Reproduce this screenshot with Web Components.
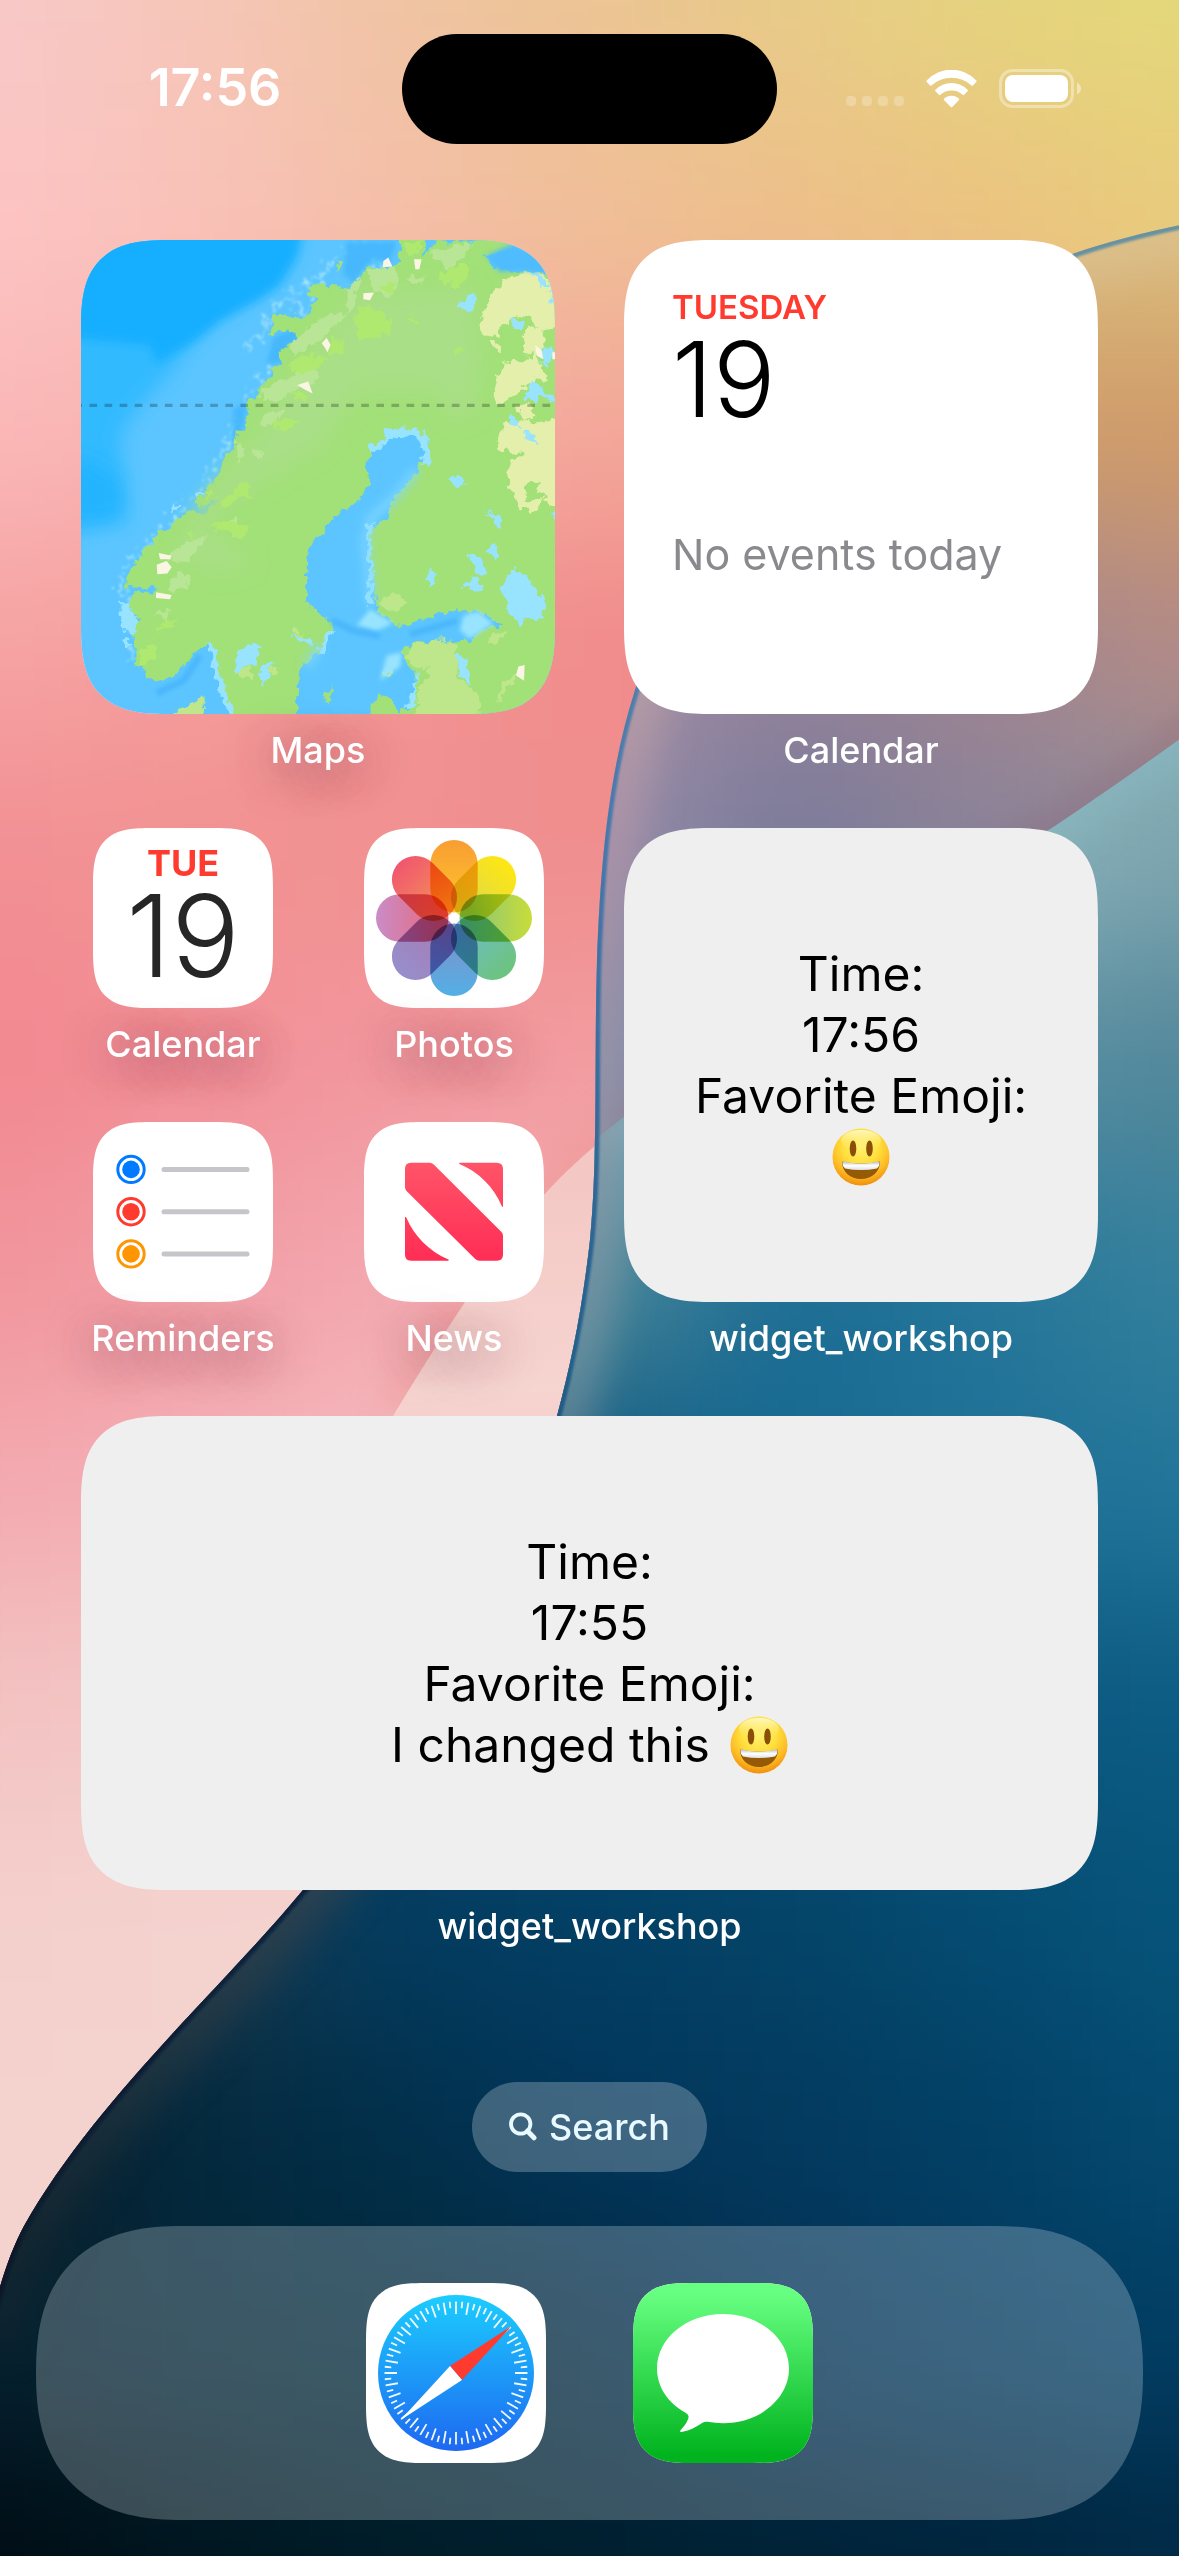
<!DOCTYPE html>
<html lang="en">
<head>
<meta charset="utf-8">
<meta name="viewport" content="width=device-width, initial-scale=1">
<title>Home Screen</title>
<style>
  html, body { margin: 0; }
  body { font-family: Inter, "Noto Sans", sans-serif; }
</style>
</head>
<body>
<home-screen>
  <status-bar slot="status" time="17:56"></status-bar>

  <widget-tile label="Maps" shade><map-view></map-view></widget-tile>
  <widget-tile label="Calendar"><calendar-view day="Tuesday" date="19">No events today</calendar-view></widget-tile>

  <app-group>
    <app-icon label="Calendar" glyph="calendar" shade></app-icon>
    <app-icon label="Photos" glyph="photos" shade></app-icon>
    <app-icon label="Reminders" glyph="reminders" shade></app-icon>
    <app-icon label="News" glyph="news" shade></app-icon>
  </app-group>
  <widget-tile label="widget_workshop"><workshop-view time="17:56"></workshop-view></widget-tile>

  <widget-tile label="widget_workshop" wide><workshop-view time="17:55">I changed this</workshop-view></widget-tile>

  <search-pill slot="search">Search</search-pill>
  <app-dock slot="dock">
    <app-icon glyph="safari" name="Safari"></app-icon>
    <app-icon glyph="messages" name="Messages"></app-icon>
  </app-dock>
</home-screen>

<script>
const define = (name, render) => customElements.define(name, class extends HTMLElement {
  connectedCallback() {
    if (this.shadowRoot) return;
    this.attachShadow({ mode: 'open' }).innerHTML = render(this);
  }
});

/* ---------- wallpaper ---------- */
const GRID_X = 196.5, GRID_Y = 213;
function mesh(rows) {
  let out = '';
  rows.forEach((row, j) => {
    const cells = row.trim().split(/\s+/);
    while (cells.length < 7) cells.push(cells[cells.length - 1]);
    cells.forEach((c, i) => {
      const x0 = i === 0 ? -400 : (i - .5) * GRID_X, x1 = i === 6 ? 1580 : (i + .5) * GRID_X + 1;
      const y0 = j === 0 ? -400 : (j - .5) * GRID_Y, y1 = j === 12 ? 2960 : (j + .5) * GRID_Y + 1;
      out += `<rect x="${x0}" y="${y0}" width="${x1 - x0}" height="${y1 - y0}" fill="#${c}"/>`;
    });
  });
  return out;
}
const PINK = [
  'f8c8c8 f6c6b8 f0c4a4 ecc494 e8cb88 e5d37e e4d87a',
  'fcc4c4 f9c2b8 f4bfa8 f0bf98 edc08a ebc480 e8cc7c',
  'fab8b8 f8b4b0 f6aca4 f4a89c f0a890 f0b088 ecc080',
  'f6a4a4 f59c9c f29494 f18c8c ef8888',
  'f29094 f29292 f19090 f08e8e f08e8e',
  'f28890 f29098 f2979e f29ca0 f0a0a0',
  'f2959c f29ea6 f3a8b0 f4b0b4 f4b0b4',
  'f3aab0 f4b0b6 f5bcc0 f5c4c4',
  'f3c2c2 f4c8c6 f5d0cc',
  'f4d0cc f4d2ce', 'f4d2ce', 'f4d2ce', 'f4d2ce'];
const SAND = [
  'dcc084', 'dcc084 dcc084 dcc084 dcc084 dcc084 dcc082 dcc080',
  'b090a0 b090a0 b090a0 b090a0 c09a80 d09c6c d09c68',
  'a890a8 a890a8 a890a8 a890a8 94829a a08490 b48a86',
  '9c8ca8 9c8ca8 9c8ca8 948ca8 787a9a 8a8299 8c909e',
  '8088ac 8088ac 8088ac 8088ac 8088ac 8c90a0 8c90a0',
  'a08090', 'a08090', 'a08090', 'a08090', 'a08090', 'a08090', 'a08090'];
const TEAL = [
  '8cb8c0', '8cb8c0', '8cb8c0', '8cb8c0',
  '80b8c4 80b8c4 80b8c4 80b8c4 82b4bc 8ab4bc 7ea4ae',
  '78bcc8 78bcc8 78bcc8 78bcc8 5a98ac 5a90a4 52879a',
  '4c8898 4c8898 4c8898 4c8898 1c6c94 24769a 34809c',
  '14507a 14507a 0f5880 0f5880 166a92 1f7096 22769a',
  '103050 103050 0a4468 084c74 0a5078 0c5680 0c5c84',
  '1c3a4c 1c3a4c 033c60 033f64 044468 054c72 06547a',
  '0c1e2a 03293e 022f4a 02355a 033a5e 034066 054a70',
  '062230 032536 022838 022840 023054 02385c 023e64',
  '000c14 00161f 001c28 001f2e 002236 00243c 012a46'];
const EDGE = 'M1260 210 C1200 220 1130 234 1075 253 C860 330 690 520 635 690 C606 780 600 880 597 960 C594 1060 598 1160 590 1240 C582 1310 572 1360 557 1416 C520 1590 420 1760 303 1890 C225 1985 95 2100 24 2226 C8 2256 -2 2290 -14 2340';
const FOLD = 'M1260 682 C1185 735 1130 776 1052 828 C900 915 760 1010 597 1138';

define('wall-paper', () => `
<style>:host{display:block} svg{display:block;width:100%;height:100%}</style>
<svg viewBox="0 0 1179 2556" preserveAspectRatio="none" aria-hidden="true">
  <defs>
    <filter id="soft" filterUnits="userSpaceOnUse" x="-100" y="-100" width="1379" height="2756" color-interpolation-filters="sRGB"><feGaussianBlur stdDeviation="74"/></filter>
    <filter id="b2" filterUnits="userSpaceOnUse" x="-100" y="-100" width="1379" height="2756"><feGaussianBlur stdDeviation="1"/></filter>
    <filter id="b12" filterUnits="userSpaceOnUse" x="-100" y="-100" width="1379" height="2756" color-interpolation-filters="sRGB"><feGaussianBlur stdDeviation="18"/></filter>
    <clipPath id="body"><path d="${EDGE} L-14 2640 L1300 2640 L1300 210Z"/></clipPath>
    <clipPath id="lower"><path d="${FOLD} L400 1200 L-100 1700 L-100 2700 L1300 2700 L1300 690Z"/></clipPath>
    <clipPath id="upper"><path d="${FOLD} L400 1200 L400 0 L1300 0Z"/></clipPath>
    <linearGradient id="petal" x1="0" y1="1140" x2="0" y2="1640" gradientUnits="userSpaceOnUse"><stop offset="0" stop-color="#f3c6c2"/><stop offset=".5" stop-color="#f6d4d0"/><stop offset="1" stop-color="#f4cfcb" stop-opacity="0"/></linearGradient>
    <linearGradient id="line" x1="0" y1="200" x2="0" y2="2300" gradientUnits="userSpaceOnUse"><stop offset="0" stop-color="#6a94a0"/><stop offset=".3" stop-color="#4a78ac"/><stop offset=".55" stop-color="#24608c"/><stop offset=".8" stop-color="#082440"/><stop offset="1" stop-color="#081828"/></linearGradient>
    <linearGradient id="glow" x1="0" y1="200" x2="0" y2="2300" gradientUnits="userSpaceOnUse"><stop offset="0" stop-color="#e0c898" stop-opacity=".4"/><stop offset=".3" stop-color="#b094a8" stop-opacity=".8"/><stop offset=".55" stop-color="#7c98a4" stop-opacity=".65"/><stop offset=".8" stop-color="#34444f" stop-opacity=".75"/><stop offset="1" stop-color="#182830" stop-opacity=".5"/></linearGradient>
  </defs>
  <g filter="url(#soft)">${mesh(PINK)}</g>
  <path d="M640 1110 C560 1170 520 1215 465 1302 C430 1355 412 1385 393 1416" fill="none" stroke="#ee8c84" stroke-opacity=".5" stroke-width="22" filter="url(#b12)"/>
  <path d="M640 1110 C560 1170 520 1215 465 1302 C430 1355 412 1385 393 1416 L280 1640 L640 1640Z" fill="url(#petal)"/>
  <g clip-path="url(#body)">
    <g filter="url(#soft)">${mesh(SAND)}</g>
    <g clip-path="url(#upper)"><path d="${FOLD}" fill="none" stroke="#8a5a6c" stroke-opacity=".6" stroke-width="18" filter="url(#b12)"/></g>
    <g clip-path="url(#lower)"><g filter="url(#soft)">${mesh(TEAL)}</g>
      <path d="${FOLD}" fill="none" stroke="#8cbcc4" stroke-opacity=".5" stroke-width="36" filter="url(#b12)"/></g>
    <path d="${EDGE}" fill="none" stroke="url(#glow)" stroke-width="70" filter="url(#b12)"/>
    <path d="${EDGE}" fill="none" stroke="url(#line)" stroke-width="9" filter="url(#b2)"/>
  </g>
</svg>`);

/* ---------- screen ---------- */
define('home-screen', () => `
<style>
  :host{display:flex;flex-direction:column;position:relative;min-height:100vh;overflow:hidden}
  wall-paper{position:absolute;inset:0;z-index:-1}
  main{display:grid;grid-template-columns:1fr 1fr;column-gap:69px;padding:0 81px;margin-top:96px}
  .search{display:flex;justify-content:center;margin:78px 0 54px}
  .dock{margin:auto 36px 36px}
</style>
<wall-paper></wall-paper>
<slot name="status"></slot>
<main><slot></slot></main>
<div class="search"><slot name="search"></slot></div>
<div class="dock"><slot name="dock"></slot></div>`);

define('status-bar', el => `
<style>
  :host{display:grid;grid-template-columns:1fr 375px 1fr;align-items:center;height:110px;padding-top:34px;color:#fff}
  time{font-size:52px;line-height:60px;font-weight:600;text-align:center;padding:0 0 2px 28px}
  .island{height:110px;border-radius:55px;background:#000}
  .side{display:flex;align-items:center;justify-content:flex-end;gap:22px;padding-right:97px}
  .cell{display:flex;gap:6px;padding-top:24px}
  .cell i{width:10px;height:10px;border-radius:4px;background:rgba(255,255,255,.24)}
  svg{display:block}
</style>
<time>${el.getAttribute('time')}</time>
<div class="island"></div>
<div class="side">
  <div class="cell"><i></i><i></i><i></i><i></i></div>
  <svg width="51" height="38" viewBox="0 0 51 38" fill="#fff" role="img" aria-label="Wi-Fi">
    <path d="M.7 10.4A34 34 0 0 1 50.3 10.4Q51 11 50.4 11.7L47 15.4Q46.3 16 45.6 15.4A30 30 0 0 0 5.4 15.4Q4.7 16 4 15.4L.6 11.7Q0 11 .7 10.4Z"/>
    <path d="M9.4 19.8A22.6 22.6 0 0 1 41.6 19.8Q42.3 20.5 41.6 21.2L38.1 24.8Q37.4 25.5 36.7 24.8A16.7 16.7 0 0 0 14.3 24.8Q13.6 25.5 12.9 24.8L9.4 21.2Q8.7 20.5 9.4 19.8Z"/>
    <path d="M18 28.8A10.6 10.6 0 0 1 33 28.8Q33.6 29.4 33 30L26.2 36.9Q25.5 37.6 24.8 36.9L18 30Q17.4 29.4 18 28.8Z"/>
  </svg>
  <svg width="83" height="40" viewBox="0 0 83 40" role="img" aria-label="Battery">
    <rect x="1.5" y="1.5" width="72" height="36" rx="12" fill="none" stroke="#fff" stroke-opacity=".38" stroke-width="3"/>
    <rect x="6" y="6" width="63" height="27" rx="8" fill="#fff"/>
    <path d="M78 13.500Q82 15.500 82 19.500T78 25.500Z" fill="#fff" fill-opacity=".45"/>
  </svg>
</div>`);

const LABEL = `
  .label{display:flex;justify-content:center;align-items:center;height:42px;padding:15px 0 57px;font-size:36px;line-height:42px;font-weight:500;color:#fff;white-space:nowrap}
  :host([shade]) .label{text-shadow:0 8px 40px rgba(110,60,80,.45),0 8px 56px rgba(110,60,80,.4)}`;

define('widget-tile', el => `
<style>
  :host{display:block;min-width:0}
  :host([wide]){grid-column:1 / -1}
  .face{height:474px;border-radius:66px;overflow:hidden;background:#efefef}
  @supports (corner-shape: superellipse(1.5)){.face{border-radius:90px;corner-shape:superellipse(1.5)}}
  ${LABEL}
</style>
<div class="face"><slot></slot></div>
<div class="label">${el.getAttribute('label')}</div>`);

define('calendar-view', el => `
<style>
  :host{display:flex;flex-direction:column;box-sizing:border-box;height:100%;padding:46px 48px;background:#fff}
  .day{font-size:33px;line-height:42px;font-weight:600;color:#ff3b30;text-transform:uppercase}
  .date{font-size:104px;line-height:102px;font-weight:300;color:#000}
  p{margin:96px 0 0;font-size:43px;line-height:56px;color:#8a8a8e;white-space:nowrap}
</style>
<div class="day">${el.getAttribute('day')}</div>
<div class="date">${el.getAttribute('date')}</div>
<p><slot></slot></p>`);

define('smiley-face', () => `
<style>:host{display:inline-flex;flex:none} svg{display:block}</style>
<svg width="58" height="58" viewBox="0 0 58 58" role="img" aria-label="😃">
  <defs>
    <radialGradient id="f" cx=".5" cy=".3" r=".72"><stop offset="0" stop-color="#fff27a"/><stop offset=".45" stop-color="#ffdf3c"/><stop offset=".75" stop-color="#fdb924"/><stop offset="1" stop-color="#ee8a08"/></radialGradient>
    <linearGradient id="h" x1="0" y1="0" x2="0" y2="1"><stop offset="0" stop-color="#fffbd0" stop-opacity=".9"/><stop offset="1" stop-color="#ffe850" stop-opacity="0"/></linearGradient>
    <linearGradient id="t" x1="0" y1="0" x2="0" y2="1"><stop offset="0" stop-color="#b8bcc4"/><stop offset=".5" stop-color="#fff"/><stop offset="1" stop-color="#dde0e6"/></linearGradient>
  </defs>
  <circle cx="29" cy="29" r="28.500" fill="url(#f)"/>
  <ellipse cx="29" cy="13" rx="20" ry="11" fill="url(#h)"/>
  <ellipse cx="21" cy="20.500" rx="3.300" ry="8" fill="#8a4e06"/>
  <ellipse cx="37.500" cy="20.500" rx="3.300" ry="8" fill="#8a4e06"/>
  <path d="M10 33.500Q29 38 48 33.500C48 44 39.500 51 29 51S10 44 10 33.500Z" fill="#945a06"/>
  <path d="M10.500 33.300Q29 38 47.500 33.300Q48 38 45 40.500Q29 43.500 13 40.500Q10 38 10.500 33.300Z" fill="url(#t)"/>
</svg>`);

define('workshop-view', el => `
<style>
  :host{display:flex;flex-direction:column;align-items:center;justify-content:center;height:100%;font-size:48px;line-height:61px;color:#000;white-space:nowrap}
  div{height:61px}
  .fav{display:flex;align-items:center;gap:20px}
</style>
<div>Time:</div>
<div>${el.getAttribute('time')}</div>
<div>Favorite Emoji:</div>
<div class="fav">${el.textContent.trim() ? '<slot></slot>' : ''}<smiley-face></smiley-face></div>`);

/* ---------- map ---------- */
define('map-view', () => `
<style>:host{display:block;height:100%} svg{display:block;width:100%;height:100%}</style>
<svg viewBox="63 56 1422 1327" preserveAspectRatio="none" role="img" aria-label="Map of Scandinavia">
  <defs>
    <filter id="coast" filterUnits="userSpaceOnUse" x="0" y="0" width="1560" height="1460"><feTurbulence type="fractalNoise" baseFrequency=".045" numOctaves="2" seed="4"/><feDisplacementMap in="SourceGraphic" scale="34" xChannelSelector="R" yChannelSelector="G"/></filter>
    <filter id="spray" filterUnits="userSpaceOnUse" x="0" y="0" width="1560" height="1460"><feTurbulence type="fractalNoise" baseFrequency=".04" numOctaves="3" seed="9"/><feDisplacementMap in="SourceGraphic" scale="90" xChannelSelector="R" yChannelSelector="G"/><feGaussianBlur stdDeviation="2.500"/></filter>
    <filter id="s30" filterUnits="userSpaceOnUse" x="-100" y="-100" width="1760" height="1660"><feGaussianBlur stdDeviation="28"/></filter>
    <filter id="s15" filterUnits="userSpaceOnUse" x="-100" y="-100" width="1760" height="1660"><feGaussianBlur stdDeviation="14"/></filter>
    <filter id="s8" filterUnits="userSpaceOnUse" x="-100" y="-100" width="1760" height="1660"><feGaussianBlur stdDeviation="6"/></filter>
  </defs>
  <rect x="0" y="0" width="1600" height="1500" fill="#5cc5ff"/>
  <path filter="url(#s30)" fill="#30baff" d="M-80 -80H740L700 110L620 190L470 280L390 350L330 430L240 520L180 600L190 700L200 840L-80 900Z"/>
  <path filter="url(#s15)" fill="#12afff" d="M-80 -80H750L710 100L660 180L600 220L480 280L400 340L290 400L270 350L-80 320Z"/>
  <path filter="url(#s30)" fill="#20b4ff" d="M-80 640L100 680L180 730L180 830L-80 860Z"/>
  <g filter="url(#spray)" fill="none" stroke="#a4e4ff" stroke-width="9">
    <path stroke-dasharray="40 12" d="M830 110L780 160L730 190L680 210L640 260L610 320L550 360"/>
    <path stroke-dasharray="24 16" d="M640 410L590 460L550 530L520 580L490 640L460 690L420 760L360 810L310 860L260 900L210 950L180 1010L195 1060L205 1150L220 1240"/>
    <path stroke-dasharray="30 10" d="M850 90L930 80L900 130M960 70L980 100L880 160M700 240L740 250L780 190"/>
  </g>
  <path filter="url(#s8)" fill="#46b8fd" d="M640 330L710 300L720 330L660 400L620 400ZM860 60H1010L990 120L940 110L880 180L850 150ZM520 530L560 510L550 590L520 640Z"/>
  <g filter="url(#coast)">
    <path fill="#a2e078" d="M1020 20L1110 20L1090 100L1130 60L1250 60L1300 20H1360L1350 90L1270 100L1320 140L1540 150V1440H930L932 1350L960 1325L1000 1345L1010 1375L1055 1370L1070 1270L1035 1240L1030 1200L1075 1180L1220 1180L1280 1140L1330 1135L1260 1095L1160 1095L1040 1138L1000 1130L950 1085L940 1000L920 880L980 830L1000 780L1060 720L1080 680L1110 680L1108 620L1060 590L975 590L970 620L930 635L932 660L920 680L928 740L880 800L840 815L770 890L748 920L738 990L738 1075L800 1110L820 1145L780 1210L730 1240L715 1300L705 1440H540L495 1310L470 1220L440 1180L350 1270L290 1298L220 1240L230 1200L215 1150L240 1120L205 1090L215 1045L290 1042L290 1030L195 1028L205 975L250 930L290 880L340 860L350 830L400 815L430 825L480 785L420 800L400 795L440 750L480 710L490 670L525 640L535 590L555 590L565 510L620 450L640 415L665 400L655 370L690 345L700 370L720 340L700 310L620 320L640 290L640 260L700 270L740 270L770 220L740 215L760 180L830 180L850 190L880 195L920 130L960 140L1020 120Z"/>
    <path fill="#a2e078" d="M825 110L845 120L830 150ZM790 1340L820 1300L805 1355Z"/>
  </g>
  <path filter="url(#s30)" fill="#a9df86" d="M900 200L1230 190L1270 380L1240 540L1180 560L1120 480L900 480L780 640L560 760L430 860L580 960L480 990L350 940L420 800L580 620L720 400Z"/>
  <g filter="url(#coast)">
    <path fill="#b9e696" d="M930 140L1010 130L1015 190L980 220L930 180ZM1110 90L1240 60L1200 110L1160 140ZM860 200L900 160L880 240L850 270L780 340L700 380L690 350L790 270L860 260ZM640 460L760 410L780 440L700 480L640 510L600 490ZM330 930L390 900L450 880L380 960L320 950ZM330 1010L370 980L390 1020L330 1040ZM575 640L620 650L600 670ZM285 1100L330 1090L325 1130ZM530 620L555 640L535 680ZM1045 160H1090L1080 180L1045 175ZM620 540L680 530L640 570L600 575ZM500 840L530 830L520 890Z"/>
    <path fill="#afe96f" d="M900 240L950 250L990 280L990 320L900 335L880 290ZM1140 150L1180 130L1220 120L1230 150L1190 195L1170 175L1145 190ZM1035 270L1080 280L1075 295ZM1040 60L1090 60L1065 100L1035 95ZM690 400L760 370L800 390L770 420L700 430ZM820 330L860 340L840 380L800 370ZM700 480L740 490L735 510L710 500ZM630 560L720 560L680 590L640 580ZM550 730L580 780L540 770L500 810L480 800ZM440 860L500 840L570 860L540 895L500 870ZM380 870L405 880L390 900ZM240 1200L290 1185L290 1230L240 1250ZM290 1150L320 1120L345 1130ZM960 190L1010 170L1000 215ZM1190 360L1210 350L1195 380ZM430 760L460 765L440 785Z"/>
    <path fill="#e3efaa" d="M1330 170L1400 145L1450 150L1485 190L1520 290L1440 310L1400 270L1350 275L1310 325L1260 320L1255 290L1275 250L1295 205ZM1330 400L1400 390L1380 330L1400 300L1450 310L1460 350L1430 380L1460 440L1390 470L1350 500L1310 520L1295 490L1305 450ZM1335 570L1400 560L1450 570L1520 530L1520 810L1470 800L1460 770L1420 820L1370 800L1350 750L1350 715L1335 705L1370 650L1310 640L1315 610ZM1370 520L1400 515L1430 550L1390 560ZM1290 340L1320 350L1310 365Z"/>
    <path fill="#a2e078" d="M1400 740L1440 730L1430 760L1460 770L1420 790L1390 770ZM1390 375L1420 370L1415 390ZM1350 650L1400 648L1395 662Z"/>
    <path fill="#bee68a" d="M1110 1180L1160 1175L1190 1190L1190 1280L1260 1330L1265 1440H1060L1075 1330L1110 1250L1075 1260L1040 1225L1060 1190ZM1290 1165L1345 1150L1310 1190L1275 1185ZM1000 1040L1040 1070L1000 1100L955 1080ZM700 1135L740 1165L700 1160ZM520 1265L570 1255L580 1290ZM330 1390L430 1330L435 1440ZM970 1265L1005 1255L990 1275ZM630 1260L660 1255L640 1275ZM1310 1350L1320 1300L1380 1265L1340 1310Z"/>
  </g>
  <g fill="#98e4ff" filter="url(#coast)">
    <path d="M1350 980L1400 990L1425 1030L1460 1075L1445 1115L1400 1115L1385 1140L1345 1090L1340 1060L1315 1025L1340 1015ZM1205 225L1245 205L1250 235L1220 258L1195 240ZM1165 725L1185 715L1222 738L1185 750ZM1280 812L1325 840L1320 862ZM1300 900L1320 925L1300 950L1285 930ZM1225 935L1262 942L1285 990L1250 988ZM1240 995L1270 1025L1245 1040L1210 1020ZM1110 970L1128 990L1115 1035L1102 1000ZM1185 1220L1218 1222L1230 1280L1235 1305L1203 1285ZM560 1185L600 1185L590 1238L525 1268L530 1220ZM620 1235L645 1240L610 1305L597 1270ZM695 1168L750 1165L765 1195ZM1350 542L1380 560L1375 582L1346 565ZM1388 588L1420 600L1442 628L1398 610ZM1420 445L1480 500L1500 530L1440 490L1430 508L1392 500ZM1346 275L1392 290L1370 308ZM1452 357L1478 358L1465 405L1442 400ZM1465 200L1500 210L1475 240ZM1415 145L1450 162L1475 190L1440 182ZM1468 825L1520 815V850ZM175 1065L190 1070L225 1110L235 1130L230 1160L190 1150ZM190 1170L215 1185L195 1200ZM345 785L360 810L335 825ZM405 755L425 765L410 780Z"/>
    <path d="M975 585L1065 583L1108 618L1112 685L1085 685L1090 640L1060 606L1000 608L960 640L925 660L925 632L970 620ZM435 1180L455 1185L475 1235L500 1320L535 1400L500 1380L470 1290L450 1210ZM920 850L945 850L930 890L940 1000L940 1080L920 1080L925 980ZM800 1150L825 1150L790 1210L775 1200ZM1075 1265L1065 1360L1020 1372L1050 1350Z"/>
  </g>
  <path filter="url(#s8)" fill="#98e4ff" d="M1210 1108L1255 1095L1300 1130L1230 1172L1200 1150ZM930 1090L1000 1128L950 1150L890 1135ZM980 1220L1025 1210L1020 1250L960 1290Z"/>
  <path filter="url(#s15)" fill="none" stroke="#84d9ff" stroke-width="22" stroke-opacity=".8" d="M1070 700L1000 780L930 840L915 900L925 990L930 1080M740 1250L780 1190"/>
  <path filter="url(#s8)" fill="none" stroke="#48b6fb" stroke-width="18" d="M815 1120L880 1150L960 1165M1050 1160L1190 1122M420 1220L370 1290L290 1325"/>
  <path filter="url(#s8)" fill="#50bcfd" d="M1280 100L1350 70L1440 100L1475 150L1380 140L1320 145Z"/>
  <path fill="#fbf5e4" d="M970 115L985 105L997 130L968 132ZM1062 110H1085L1078 138H1066ZM910 205L942 203L930 225L910 222ZM785 345L800 330L812 350L802 370L795 358ZM712 462L745 452L758 486L735 475ZM296 932L335 940L330 950H300ZM290 965L320 955L335 972L322 990L292 992ZM288 1042L335 1050L330 1062L288 1058ZM1375 1250L1394 1246L1392 1290L1368 1275ZM1425 350L1445 365L1450 390L1430 380ZM1477 370H1485V390H1477Z"/>
  <path d="M63 519H1485" stroke="#000" stroke-opacity=".24" stroke-width="9" stroke-dasharray="23 22.300" stroke-dashoffset="20"/>
</svg>`);

/* ---------- app icons ---------- */
const petals = [
  ['#f99d33', '#fcc42c'], ['#ffe712', '#dcd84c'], ['#c8dd38', '#88c47c'], ['#6cc47c', '#70bcc8'],
  ['#52b0e6', '#8090c8'], ['#968ecb', '#a87cb4'], ['#c98cc8', '#e86878'], ['#f1566f', '#f29258']];
const ticks = Array.from({ length: 72 }, (_, i) =>
  `<path d="M90 18.500V${i % 2 ? 25 : 31}" transform="rotate(${i * 5} 90 90)"/>`).join('');
const GLYPHS = {
  calendar: '<div class="cal"><b>TUE</b><span>19</span></div>',
  photos: `<svg viewBox="0 0 180 180"><defs>${petals.map((c, i) =>
      `<linearGradient id="p${i}" x1="0" y1="0" x2="0" y2="1"><stop offset="0" stop-color="${c[0]}"/><stop offset=".9" stop-color="${c[1]}"/></linearGradient>`).join('')}</defs>
    <g style="isolation:isolate">${petals.map((c, i) =>
      `<rect x="66.300" y="12" width="47.400" height="72.500" rx="23.700" fill="url(#p${i})" transform="rotate(${i * 45} 90 90)" style="mix-blend-mode:multiply"/>`).join('')}</g>
    <circle cx="90" cy="90" r="5" fill="#fff"/></svg>`,
  reminders: `<svg viewBox="0 0 180 180">${[['#007aff', 47.4], ['#ff3b30', 89.7], ['#ff9500', 131.9]].map(([c, y]) =>
      `<circle cx="38" cy="${y}" r="13.200" fill="none" stroke="${c}" stroke-width="3"/><circle cx="38" cy="${y}" r="8.800" fill="${c}"/>
       <path d="M71 ${y}H154" stroke="#c6c6ca" stroke-width="5" stroke-linecap="round"/>`).join('')}</svg>`,
  news: `<svg viewBox="0 0 180 180"><defs><linearGradient id="n" x1="0" y1="40" x2="0" y2="139" gradientUnits="userSpaceOnUse"><stop offset="0" stop-color="#ff5468"/><stop offset="1" stop-color="#ff2d55"/></linearGradient></defs>
    <g fill="url(#n)"><path d="M47 40.700H65.500Q68 40.700 70 42.700L137.500 110Q139 111.500 139 114V132.500Q139 138.700 133 138.700H115.500Q113 138.700 111 136.700L42.500 69Q41 67.500 41 65V47Q41 40.700 47 40.700Z"/>
    <path d="M95.500 40.700H132.500Q139 40.700 139 47V84.500Q138.500 85.500 137.700 84C130 65 114 49.500 95.500 42Q94.500 41 95.500 40.700Z"/>
    <path d="M41 95.500Q41.500 94 42.300 95.500C50 114 65.500 129.500 84.500 137.500Q85.500 138.500 84 138.700H47Q41 138.700 41 132.500Z"/></g></svg>`,
  safari: `<svg viewBox="0 0 180 180"><defs><linearGradient id="s" x1="0" y1="0" x2="0" y2="1"><stop offset="0" stop-color="#1ccdfe"/><stop offset="1" stop-color="#1d68f1"/></linearGradient></defs>
    <circle cx="90" cy="90" r="78" fill="url(#s)"/><g stroke="#fff" stroke-width="1.800" stroke-opacity=".95">${ticks}</g>
    <path d="M145.700 42.800L84 83L96 97Z" fill="#ff3b30"/><path d="M34.300 137.200L84 83L96 97Z" fill="#fff"/></svg>`,
  messages: `<svg viewBox="0 0 180 180"><defs><linearGradient id="m" x1="0" y1="0" x2="0" y2="1"><stop offset=".06" stop-color="#67ff81"/><stop offset=".95" stop-color="#01b41f"/></linearGradient></defs>
    <rect width="180" height="180" fill="url(#m)"/>
    <path fill="#fff" d="M90 31C126.500 31 156 55.400 156 85.600S126.500 140.200 90 140.200Q82.500 140.200 74.500 138.800Q72 138.300 69.500 139.700C62.500 144.500 56 148 48.500 149Q46 149 47.700 147C52 142.500 55.500 137 55.600 133.500Q55.600 131.500 53 130C35 120.500 24 104 24 85.600C24 55.400 53.500 31 90 31Z"/></svg>`
};
define('app-icon', el => `
<style>
  :host{display:block;width:180px}
  button{display:flex;flex-direction:column;align-items:center;width:100%;padding:0;border:0;background:none;font:inherit;color:inherit}
  .face{width:180px;height:180px;border-radius:41px;overflow:hidden;background:#fff}
  @supports (corner-shape: superellipse(1.5)){.face{border-radius:60px;corner-shape:superellipse(1.6)}}
  svg{display:block;width:100%;height:100%}
  .cal{display:flex;flex-direction:column;align-items:center;padding-top:14px}
  .cal b{font-size:36px;line-height:42px;font-weight:700;color:#ff3b30}
  .cal span{font-size:114px;line-height:104px;font-weight:300;color:#262626}
  ${LABEL}
</style>
<button type="button" aria-label="${el.getAttribute('label') || el.getAttribute('name')}">
  <div class="face">${GLYPHS[el.getAttribute('glyph')]}</div>
  ${el.hasAttribute('label') ? `<div class="label">${el.getAttribute('label')}</div>` : ''}
</button>`);

define('app-group', () => `
<style>:host{display:grid;grid-template-columns:180px 180px;justify-content:space-between;align-content:start;padding:0 11px 0 12px}</style>
<slot></slot>`);

define('search-pill', () => `
<style>
  :host{display:block}
  button{display:flex;align-items:center;gap:12px;height:90px;padding:0 37px;border:0;border-radius:45px;background:rgba(255,255,255,.24);color:#e8f9ff;font:500 36px/42px Inter,"Noto Sans",sans-serif}
  svg{display:block}
</style>
<button type="button">
  <svg width="28" height="30" viewBox="0 0 28 30" fill="none" stroke="currentColor" aria-hidden="true"><circle cx="11.700" cy="12" r="9.700" stroke-width="3.800"/><path d="M18.500 19L25 25.800" stroke-width="5" stroke-linecap="round"/></svg>
  <slot></slot>
</button>`);

define('app-dock', () => `
<style>
  :host{display:flex;justify-content:center;align-items:center;gap:87px;box-sizing:border-box;height:294px;border-radius:120px;background:rgba(243,251,255,.24)}
  @supports (corner-shape: superellipse(1.5)){:host{border-radius:147px;corner-shape:superellipse(1.3)}}
  nav{display:contents}
</style>
<nav><slot></slot></nav>`);
</script>
</body>
</html>
